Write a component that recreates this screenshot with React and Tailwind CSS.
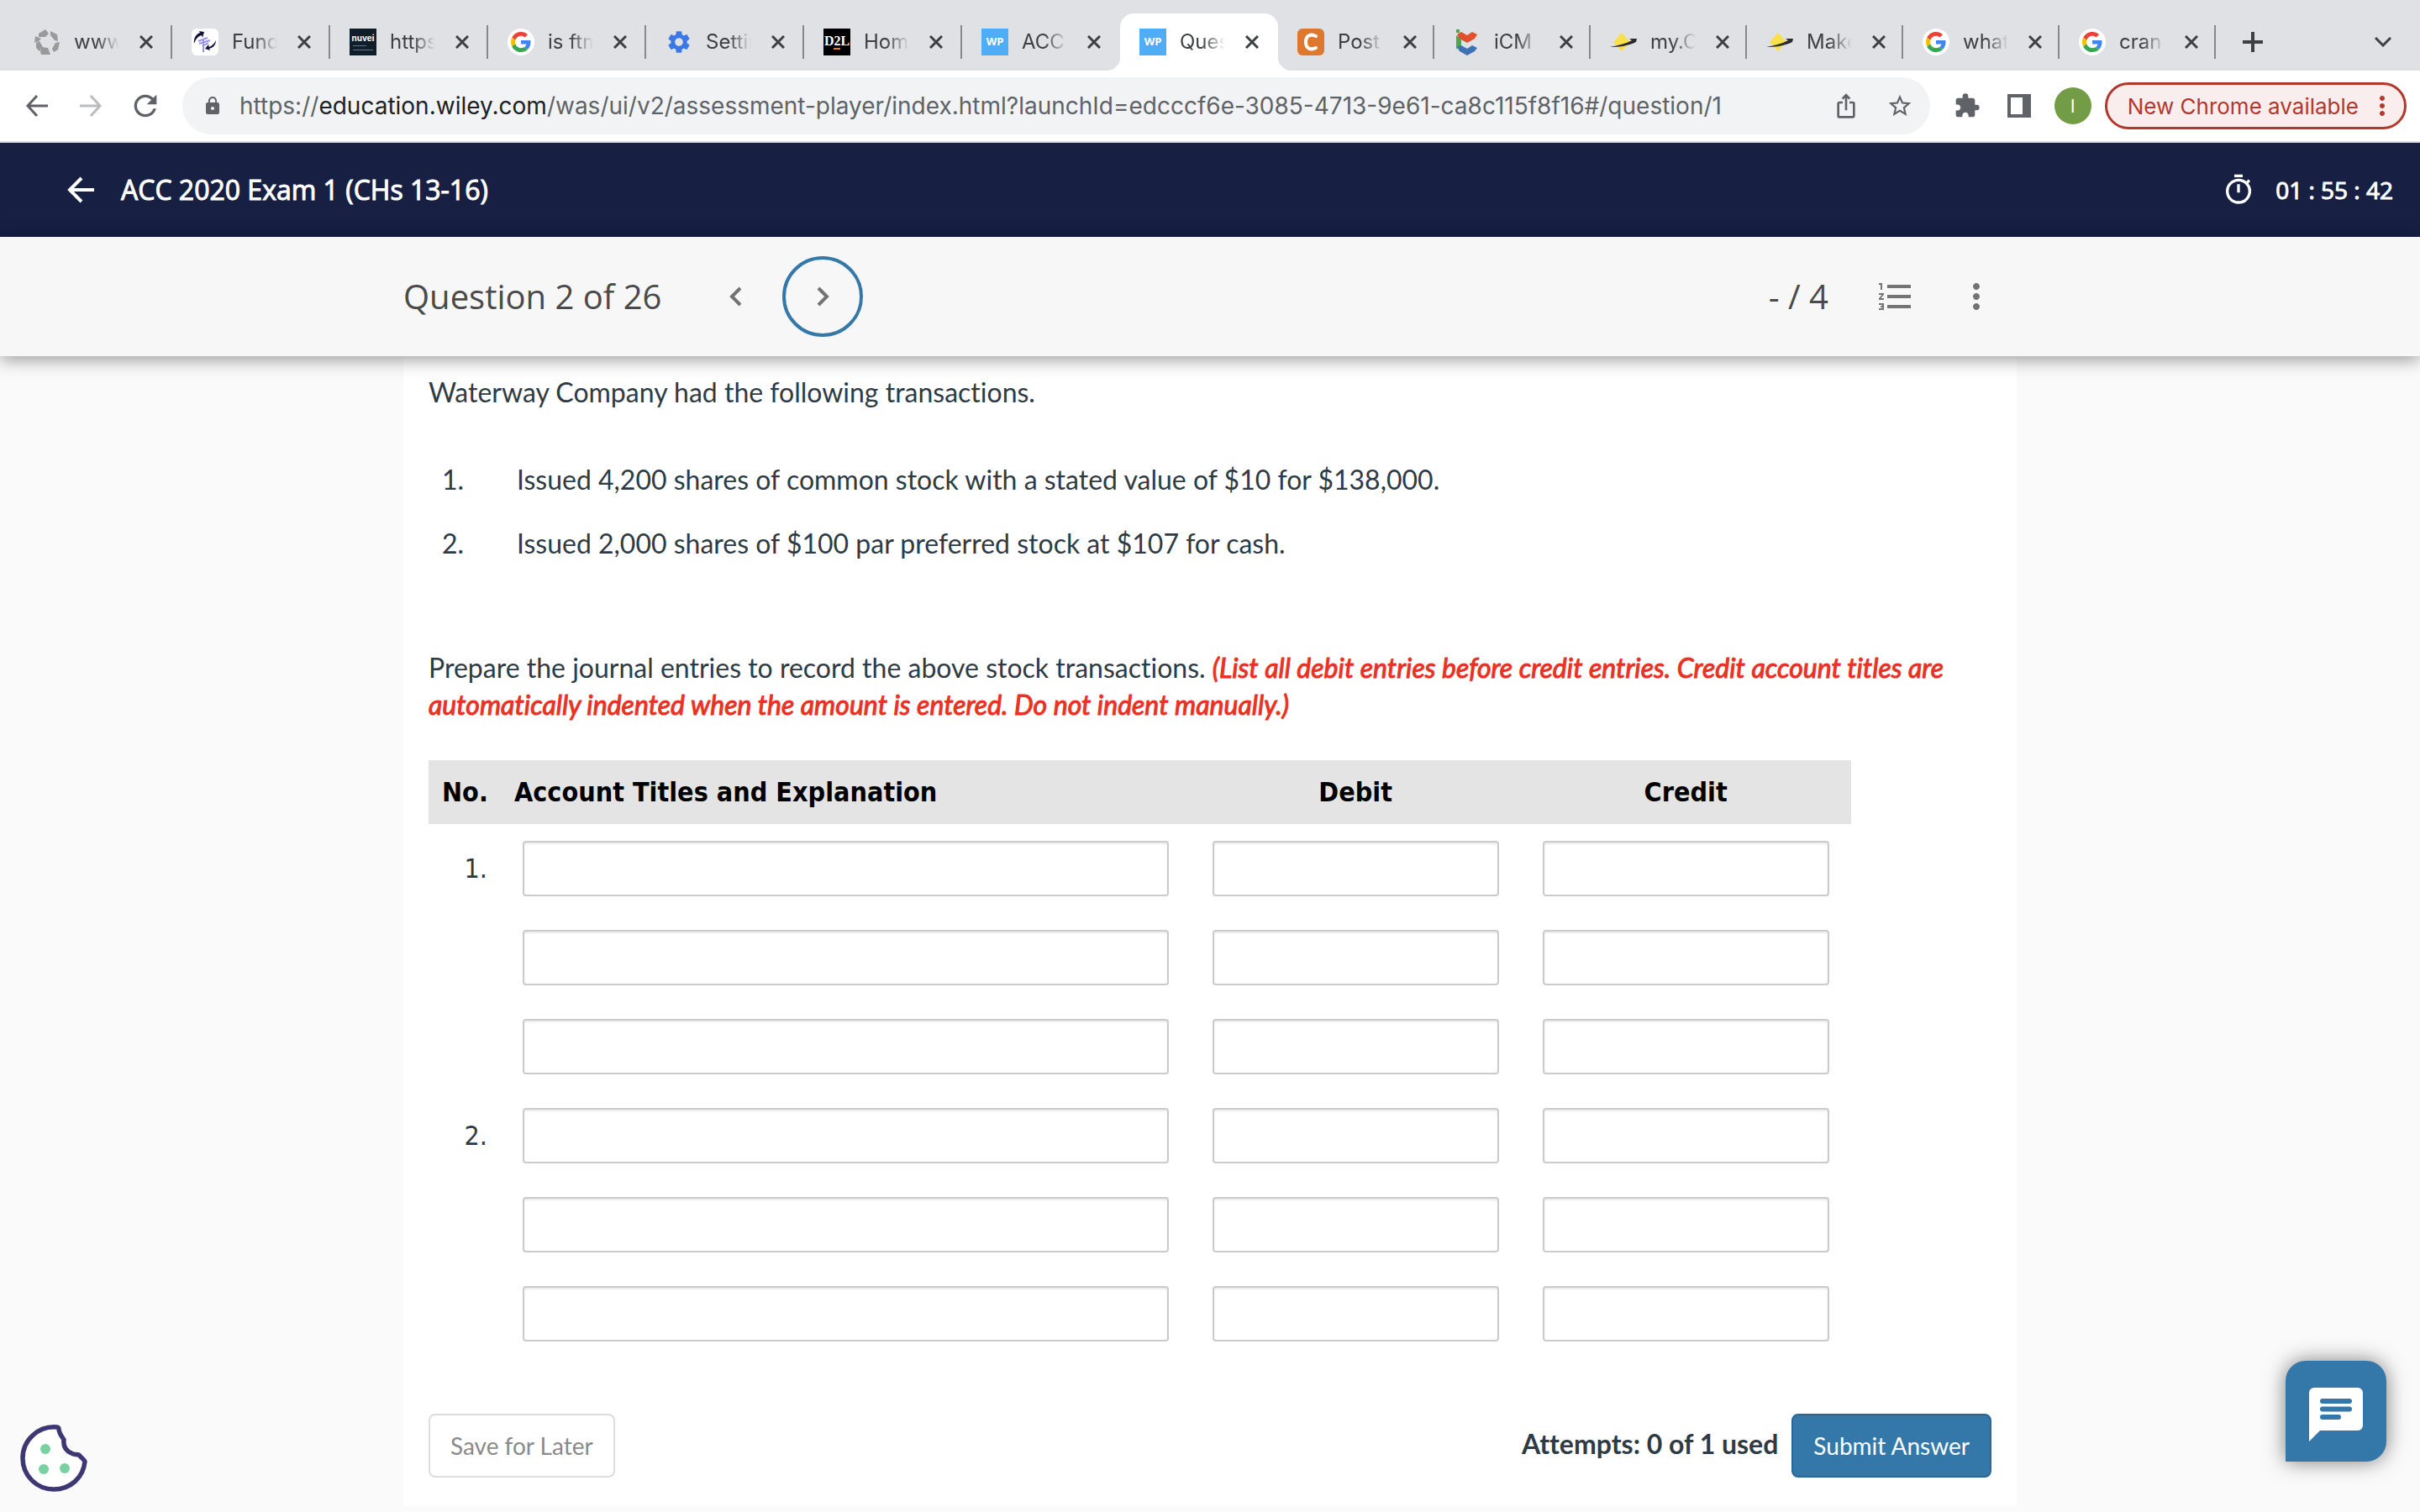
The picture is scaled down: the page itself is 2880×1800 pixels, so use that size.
import React from "react";
import {
  MdLock,
  MdOutlineTimer,
  MdFormatListNumbered,
  MdMoreVert,
  MdExtension,
  MdSettings,
  MdStarBorder,
  MdIosShare,
  MdRefresh,
} from "react-icons/md";

const GoogleIcon = () => (
  <svg viewBox="0 0 32 32" className="size-8">
    <circle cx="16" cy="16" r="16" fill="#fff" />
    <g transform="translate(4 4) scale(0.5)">
      <path fill="#EA4335" d="M24 9.5c3.54 0 6.71 1.22 9.21 3.6l6.85-6.85C35.9 2.38 30.47 0 24 0 14.62 0 6.51 5.38 2.56 13.22l7.98 6.19C12.43 13.72 17.74 9.5 24 9.5z" />
      <path fill="#4285F4" d="M46.98 24.55c0-1.57-.15-3.09-.38-4.55H24v9.02h12.94c-.58 2.96-2.26 5.48-4.78 7.18l7.73 6c4.51-4.18 7.09-10.36 7.09-17.65z" />
      <path fill="#FBBC05" d="M10.53 28.59c-.48-1.45-.76-2.99-.76-4.59s.27-3.14.76-4.59l-7.98-6.19C.92 16.46 0 20.12 0 24c0 3.88.92 7.54 2.56 10.78l7.97-6.19z" />
      <path fill="#34A853" d="M24 48c6.48 0 11.93-2.13 15.89-5.81l-7.73-6c-2.15 1.45-4.92 2.3-8.16 2.3-6.26 0-11.57-4.22-13.47-9.91l-7.98 6.19C6.51 42.62 14.62 48 24 48z" />
    </g>
  </svg>
);

const ApertureIcon = () => (
  <svg viewBox="0 0 32 32" className="size-8" fill="#9a9a9a">
    <path d="M6 6l8-5 4 5-4 4-8 0z" />
    <path d="M20 3l8 4 1 8-4-1-5-6z" />
    <path d="M26 17l5-1-2 9-5 3-2-4z" />
    <path d="M10 22l7 1 3 8-11 0-1-4z" />
    <path d="M3 17l4-2 4 7-4 5-4-4z" />
    <path d="M2 9l7 3-3 3-5 2z" />
  </svg>
);

const PulseIcon = () => (
  <svg viewBox="0 0 32 32" className="size-8">
    <rect width="32" height="32" rx="6" fill="#fff" />
    <path d="M3 18C2 11 6 6 10 5L9 3l6 1-2 7-1-3C8 9 5 12 3 18z" fill="#14143c" />
    <path d="M29 14c0 6-4 9-8 10l1 2-6-2 4-5 1 3c4-2 6-4 8-8z" fill="#14143c" />
    <path d="M8 15l11-4M9 18l13-4M13 21l7-4M14 14v14" fill="none" stroke="#9a94f0" strokeWidth="2" />
  </svg>
);

const NuveiIcon = () => (
  <span className="flex size-8 flex-col items-center justify-center bg-[#0e1e2b] font-['Inter',sans-serif] leading-none text-white">
    <b className="text-[10px]">nuvei</b>
    <span className="mt-1 mr-2 h-px w-4 bg-gray-500" />
    <span className="mt-1 h-px w-6 bg-gray-500" />
  </span>
);

const D2LIcon = () => (
  <span className="flex size-8 flex-col items-center justify-center bg-black font-['Liberation_Serif',serif] text-[16px] leading-none font-bold text-white">
    D2L
    <span className="h-0.5 w-2 bg-[#e87722]" />
  </span>
);

const WileyIcon = () => (
  <span className="flex size-8 items-center justify-center bg-[#4fadf5] font-['Open_Sans',sans-serif] text-[13px] font-bold text-white">
    WP
  </span>
);

const CheggIcon = () => (
  <svg viewBox="0 0 32 32" className="size-8" fill="none">
    <rect width="32" height="32" rx="6" fill="#dd782e" />
    <path d="M22 9C16 6 10 8 10 16s6 10 12 7" stroke="#fff" strokeWidth="4" strokeLinecap="round" />
  </svg>
);

const HeartsIcon = () => (
  <svg viewBox="0 0 32 32" className="size-8">
    <path d="M3 1h4v4H3zM3 8l6 4v11l-6 1z" fill="#4aa84e" />
    <path d="M4 7l5-3 7 4 6-4 6 3-3 5-9 5-9-5z" fill="#e2502d" />
    <path d="M4 22l5-2 7 4 6-4 6 3-3 4-9 5-9-5z" fill="#3f72b5" />
  </svg>
);

const CometIcon = () => (
  <svg viewBox="0 0 32 32" className="size-8">
    <path d="M14 5l10 11-10 11L4 16z" fill="#f8e04a" />
    <path d="M0 22c10-2 19-4 26-8l-3-2 9 0-1 4C21 21 10 22 0 22z" fill="#2b2b2b" />
  </svg>
);

const tabs = [
  { title: "www.", icon: <ApertureIcon /> },
  { title: "Fund", icon: <PulseIcon /> },
  { title: "https:", icon: <NuveiIcon /> },
  { title: "is ftm", icon: <GoogleIcon /> },
  { title: "Settin", icon: <MdSettings className="size-8 text-[#3b78e7]" /> },
  { title: "Home", icon: <D2LIcon /> },
  { title: "ACC", icon: <WileyIcon /> },
  { title: "Ques", icon: <WileyIcon />, active: true },
  { title: "Post", icon: <CheggIcon /> },
  { title: "iCM", icon: <HeartsIcon /> },
  { title: "my.C", icon: <CometIcon /> },
  { title: "Make", icon: <CometIcon /> },
  { title: "what", icon: <GoogleIcon /> },
  { title: "cran", icon: <GoogleIcon /> },
];

const rows = ["1.", "", "", "2.", "", ""];

const BrowserTab = ({ tab, width, divider }) => (
  <div
    className={`relative flex h-[68px] items-center pl-[23px] ${width} ${
      tab.active ? "rounded-t-2xl bg-white" : ""
    }`}
  >
    {tab.icon}
    <span className="ml-4 w-[54px] overflow-hidden whitespace-nowrap text-[24px] text-[#3c4043] [mask-image:linear-gradient(to_right,black_50%,transparent)]">
      {tab.title}
    </span>
    <button aria-label={`Close ${tab.title}`} className="ml-6">
      <svg viewBox="0 0 16 16" className="size-4" stroke="#3c4043" strokeWidth="3">
        <path d="M1 1l14 14M15 1L1 15" />
      </svg>
    </button>
    {divider && <span className="absolute right-0 h-10 w-0.5 bg-[#85888c]" />}
    {tab.active && (
      <>
        <span className="absolute bottom-0 -left-4 size-4 bg-[radial-gradient(circle_at_0_0,transparent_16px,white_16px)]" />
        <span className="absolute -right-4 bottom-0 size-4 bg-[radial-gradient(circle_at_100%_0,transparent_16px,white_16px)]" />
      </>
    )}
  </div>
);

const Browser = () => (
  <div className="border-b-2 border-[#dadce0] bg-white font-['Inter',sans-serif]">
    {/* Tab strip */}
    <div className="flex h-[84px] items-center bg-[#dfe1e5] pt-4 pl-[17px]">
      {tabs.map((tab, i) => (
        <BrowserTab
          key={i}
          tab={tab}
          width={i < 8 ? "w-[188px]" : "w-[186px]"}
          divider={!tab.active && !(tabs[i + 1] && tabs[i + 1].active)}
        />
      ))}
      <button aria-label="New tab" className="ml-8">
        <svg viewBox="0 0 24 24" className="size-6" stroke="#3c4043" strokeWidth="4">
          <path d="M12 0v24M0 12h24" />
        </svg>
      </button>
      <button aria-label="Search tabs" className="mr-[34px] ml-auto">
        <svg viewBox="0 0 20 12" className="w-5" fill="none" stroke="#3c4043" strokeWidth="3">
          <path d="M1 1l9 9 9-9" />
        </svg>
      </button>
    </div>

    {/* Toolbar */}
    <div className="flex h-[84px] items-center pr-4 pl-[31px] text-[#5f6368]">
      <button aria-label="Back">
        <svg viewBox="0 0 26 26" className="size-[26px]" fill="none" stroke="#5f6368" strokeWidth="3">
          <path d="M26 13H2M13 1L2 13l11 12" />
        </svg>
      </button>
      <button aria-label="Forward" className="ml-[38px]">
        <svg viewBox="0 0 26 26" className="size-[26px]" fill="none" stroke="#babcbe" strokeWidth="3">
          <path d="M0 13h24M13 1l11 12-11 12" />
        </svg>
      </button>
      <button aria-label="Reload" className="ml-8">
        <MdRefresh className="size-10" />
      </button>
      <div className="ml-6 flex h-[68px] flex-1 items-center rounded-full bg-[#f1f3f4] px-6">
        <MdLock className="size-6" />
        <div role="textbox" aria-label="Address" className="ml-5 flex-1 whitespace-nowrap text-[28px]">
          https://<span className="text-[#202124]">education.wiley.com</span>
          /was/ui/v2/assessment-player/index.html?launchId=edcccf6e-3085-4713-9e61-ca8c115f8f16#/question/1
        </div>
        <button aria-label="Share">
          <MdIosShare className="size-8" />
        </button>
        <button aria-label="Bookmark" className="ml-8 -mr-1">
          <MdStarBorder className="size-8" />
        </button>
      </div>
      <button aria-label="Extensions" className="ml-7">
        <MdExtension className="size-8" />
      </button>
      <button aria-label="Side panel" className="ml-8">
        <svg viewBox="0 0 28 28" className="size-7">
          <path fill="#5f6368" fillRule="evenodd" d="M0 0h28v28H0zM4 4v20h14V4z" />
        </svg>
      </button>
      <button className="ml-7 size-11 rounded-full bg-[#729c45] text-[22px] text-white">I</button>
      <button className="ml-4 flex h-14 items-center rounded-full border-[3px] border-[#b3372b] bg-[#f9eeed] pr-2 pl-6 text-[26px] text-[#b3372b]">
        New Chrome available
        <MdMoreVert className="ml-2.5 size-9" />
      </button>
    </div>
  </div>
);

const App = () => {
  return (
    <div className="relative min-h-screen bg-[#fafafa] font-['Lato',sans-serif] text-[#2f3b44]">
      <Browser />

      {/* Exam title */}
      <header className="flex h-28 items-center bg-[#171f43] pr-8 pl-20 font-['Open_Sans',sans-serif] text-white">
        <button aria-label="Back to course">
          <svg viewBox="0 0 32 32" className="size-8" fill="none" stroke="#fff" strokeWidth="4">
            <path d="M32 16H3M17 2L3 16l14 14" />
          </svg>
        </button>
        <h1 className="ml-8 text-[32px] font-medium [-webkit-text-stroke:1px_#fff]">
          ACC 2020 Exam 1 (CHs 13-16)
        </h1>
        <MdOutlineTimer className="ml-auto size-10" />
        <span className="ml-6 text-[28px] font-medium [-webkit-text-stroke:1px_#fff]">
          01 : 55 : 42
        </span>
      </header>

      {/* Question navigation */}
      <nav className="relative h-[142px] bg-[#f7f7f7] font-['Open_Sans',sans-serif] text-[40px] text-[#4a4a4a] shadow-[0_4px_20px_rgba(0,0,0,0.4)]">
        <div className="mx-auto flex h-full max-w-[1920px] items-center">
          <h2>Question 2 of 26</h2>
          <button aria-label="Previous question" className="ml-20">
            <svg viewBox="0 0 16 24" className="h-6 w-4" fill="none" stroke="#737373" strokeWidth="4">
              <path d="M14 2L4 12l10 10" />
            </svg>
          </button>
          <button
            aria-label="Next question"
            className="ml-12 flex size-24 items-center justify-center rounded-full border-4 border-[#3478aa]"
          >
            <svg viewBox="0 0 16 24" className="h-6 w-4" fill="none" stroke="#737373" strokeWidth="4">
              <path d="M3 2l10 10L3 22" />
            </svg>
          </button>
          <span className="ml-auto">- / 4</span>
          <button aria-label="Question list" className="ml-14 text-[#737373]">
            <MdFormatListNumbered className="size-12" />
          </button>
          <button aria-label="More options" className="mr-6 ml-12 text-[#737373]">
            <MdMoreVert className="size-12" />
          </button>
        </div>
      </nav>

      <main className="mx-auto max-w-[1920px] bg-white px-[30px] pt-[21px] pb-[34px] text-[32px] leading-[44px] [font-variant-ligatures:none]">
        <p>Waterway Company had the following transactions.</p>

        <ol className="mt-[60px] space-y-8">
          <li className="flex pl-4">
            <span className="w-[89px]">1.</span>
            Issued 4,200 shares of common stock with a stated value of $10 for $138,000.
          </li>
          <li className="flex pl-4">
            <span className="w-[89px]">2.</span>
            Issued 2,000 shares of $100 par preferred stock at $107 for cash.
          </li>
        </ol>

        <p className="mt-[104px]">
          Prepare the journal entries to record the above stock transactions.{" "}
          <em className="text-[#e93124] [-webkit-text-stroke:1px_#e93124]">
            (List all debit entries before credit entries. Credit account titles are
            automatically indented when the amount is entered. Do not indent manually.)
          </em>
        </p>

        {/* Journal entries */}
        <table className="mt-11 w-[91%] table-fixed font-['DejaVu_Sans_Condensed','DejaVu_Sans',sans-serif]">
          <thead>
            <tr className="h-[76px] bg-[#e4e4e4] text-black">
              <th className="w-[86px] pl-4 text-left">No.</th>
              <th className="pl-4 text-left">Account Titles and Explanation</th>
              <th className="w-[393px]">Debit</th>
              <th className="w-[393px]">Credit</th>
            </tr>
          </thead>
          <tbody>
            {rows.map((no, i) => (
              <tr key={i} className="h-[106px]">
                <td className="pr-4 text-right">{no}</td>
                {["Account title", "Debit", "Credit"].map((label) => (
                  <td key={label} className="px-[26px]">
                    <input
                      type="text"
                      aria-label={`${label}, line ${i + 1}`}
                      className="block h-[66px] w-full rounded-sm border-2 border-[#cbcbcb] bg-white px-3 shadow-[inset_0_2px_2px_rgba(0,0,0,0.08)]"
                    />
                  </td>
                ))}
              </tr>
            ))}
          </tbody>
        </table>

        <div className="mt-[66px] flex items-center">
          <button className="h-[76px] rounded-lg border-2 border-[#dddddd] px-6 text-[28px] text-[#8a8a8a]">
            Save for Later
          </button>
          <span className="mr-4 ml-auto pb-1 font-bold">Attempts: 0 of 1 used</span>
          <button className="h-[76px] rounded-lg border-2 border-[#2b6694] bg-[#3478aa] px-6 text-[28px] text-white">
            Submit Answer
          </button>
        </div>
      </main>

      {/* Floating widgets */}
      <button aria-label="Cookie preferences" className="fixed bottom-6 left-6">
        <svg viewBox="0 0 80 80" className="size-20">
          <path
            d="M44 3C22 1 3 18 3 40c0 21 17 37 37 37s35-14 37-33c-1-3-5-5-7-8-3-1-6 0-9-2-7-3-10-8-9-16-3-5-6-8-6-13 0-1-1-2-2-2z"
            fill="#fff"
            stroke="#3d3873"
            strokeWidth="5.5"
            strokeLinejoin="round"
          />
          <circle cx="30" cy="29" r="6" fill="#79d1a1" />
          <circle cx="28" cy="53" r="6" fill="#79d1a1" />
          <circle cx="53" cy="52" r="6" fill="#79d1a1" />
        </svg>
      </button>
      <button
        aria-label="Open chat"
        className="fixed right-10 bottom-[60px] flex size-[120px] items-center justify-center rounded-3xl rounded-bl-none bg-[#3478aa] shadow-[0_0_24px_rgba(0,0,0,0.5)]"
      >
        <svg viewBox="0 0 64 64" className="mt-2 size-16">
          <path d="M6 0h52a6 6 0 0 1 6 6v39a6 6 0 0 1-6 6H13L0 64V6a6 6 0 0 1 6-6z" fill="#fff" />
          <path d="M16 16h32M16 25.5h32M16 35h19" stroke="#3478aa" strokeWidth="6" strokeLinecap="round" />
        </svg>
      </button>
    </div>
  );
};

export default App;
